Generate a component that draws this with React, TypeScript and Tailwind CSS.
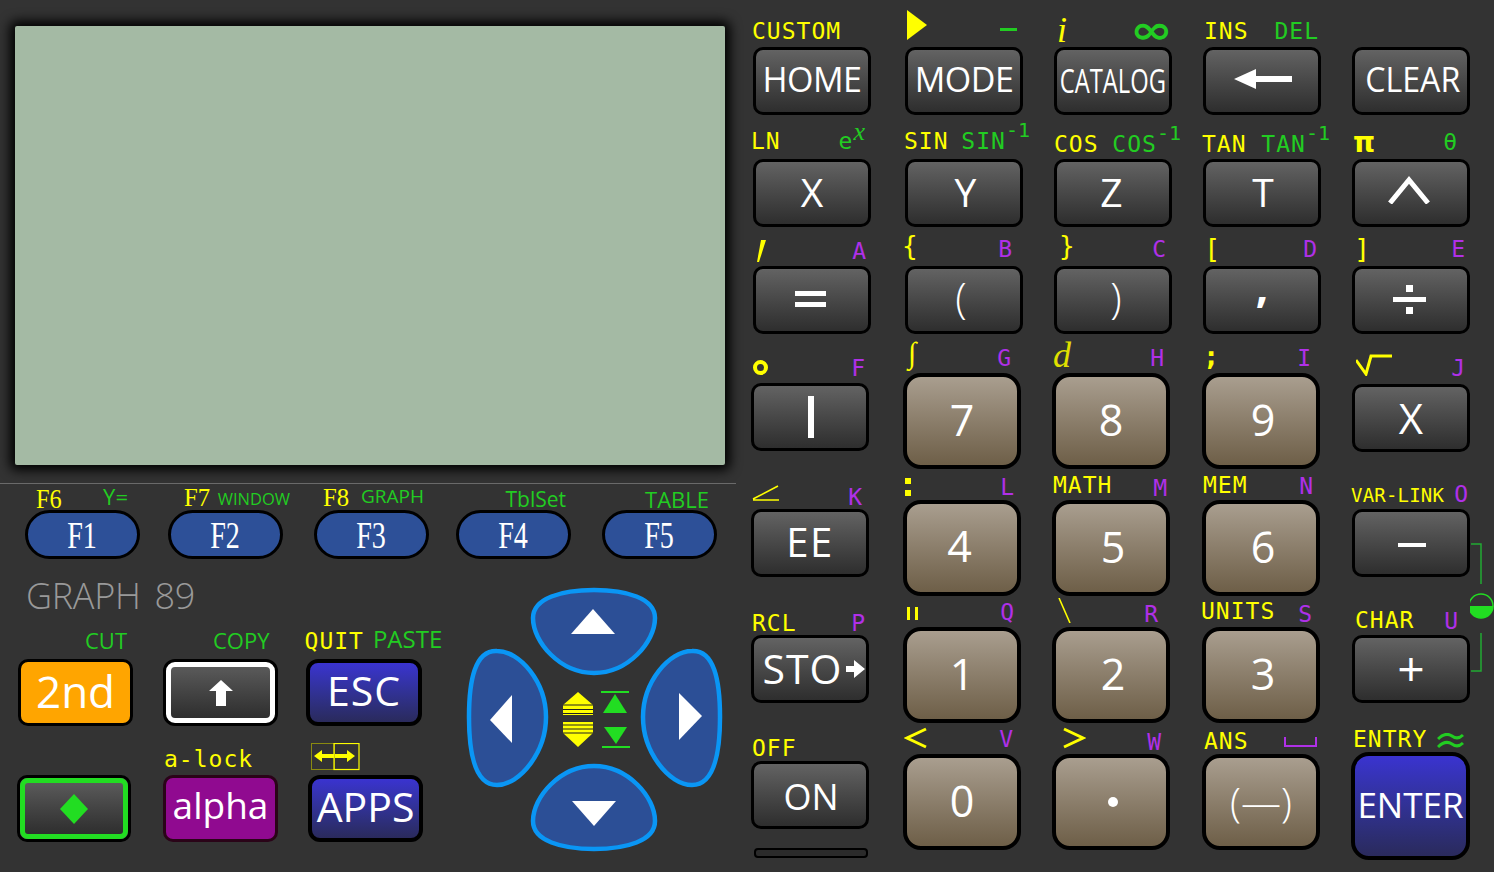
import type { ReactNode } from "react";

type Tone = "gray" | "tan" | "blue" | "orange" | "purple";

const TONES: Record<Tone, string> = {
  gray: "border-[3px] border-black rounded-[10px] bg-linear-to-b from-[#636363] to-[#2e2e2e]",
  tan: "border-[4px] border-black rounded-[18px] bg-linear-to-b from-[#a99e8f] to-[#6e5f48]",
  blue: "border-[4px] border-black rounded-[12px] bg-linear-to-b from-[#3a33d0] to-[#2a2a5c]",
  orange: "border-[3px] border-black rounded-[10px] bg-[#ffa500]",
  purple: "border-[3px] border-[#2a0418] rounded-[10px] bg-[#900a90]",
};

function Key({
  tone = "gray",
  className = "w-[118px] h-[68px]",
  children,
}: {
  tone?: Tone;
  className?: string;
  children?: ReactNode;
}) {
  return (
    <div
      className={`flex shrink-0 items-center justify-center overflow-hidden whitespace-nowrap text-white ${TONES[tone]} ${className}`}
    >
      {children}
    </div>
  );
}

const LABEL_COLORS = {
  y: "text-[#ffff00]",
  g: "text-[#22cc22]",
  p: "text-[#b030e8]",
};

function L({
  c = "y",
  className = "",
  children,
}: {
  c?: "y" | "g" | "p";
  className?: string;
  children?: ReactNode;
}) {
  return (
    <span
      className={`block whitespace-nowrap font-['DejaVu_Sans_Mono',monospace] text-[23px] leading-none tracking-[1px] ${LABEL_COLORS[c]} ${className}`}
    >
      {children}
    </span>
  );
}

function Cell({
  h,
  left,
  right,
  children,
}: {
  h: string;
  left?: ReactNode;
  right?: ReactNode;
  children: ReactNode;
}) {
  return (
    <div className={`flex w-[120px] flex-col ${h}`}>
      <div className="flex flex-1 items-end justify-between">
        {left ?? <span />}
        {right ?? <span />}
      </div>
      {children}
    </div>
  );
}

// superscript -1
function Inv() {
  return <span className="align-[12px] text-[20px] tracking-[0px]">-1</span>;
}

const F_KEYS = [
  {
    ml: "ml-[25px]",
    key: "F1",
    top: <span className="ml-[11px] mb-[-3px] block origin-left scale-x-[0.9] font-['Liberation_Serif',serif] text-[27px] leading-none text-[#ffff00]">F6</span>,
    side: <span className="mr-[12px] mb-[3px] text-[22px] leading-none text-[#22cc22]">Y=</span>,
  },
  {
    ml: "ml-[28px]",
    key: "F2",
    top: <span className="ml-[16px] -mb-[1px] block origin-left scale-x-[0.95] font-['Liberation_Serif',serif] text-[26px] leading-none text-[#ffff00]">F7</span>,
    side: <span className="mb-[3px] -mr-[7px] text-[16.5px] leading-none text-[#22cc22]">WINDOW</span>,
  },
  {
    ml: "ml-[31px]",
    key: "F3",
    top: <span className="ml-[9px] -mb-[1px] block origin-left scale-x-[0.95] font-['Liberation_Serif',serif] text-[26px] leading-none text-[#ffff00]">F8</span>,
    side: <span className="mb-[4px] mr-[5px] text-[19px] leading-none text-[#22cc22]">GRAPH</span>,
  },
  {
    ml: "ml-[27px]",
    key: "F4",
    top: <span />,
    side: <span className="mb-[0px] mr-[5px] text-[21px] leading-none text-[#22cc22]">TblSet</span>,
  },
  {
    ml: "ml-[31px]",
    key: "F5",
    top: <span />,
    side: <span className="mb-[0px] mr-[8px] text-[22px] leading-none text-[#22cc22]">TABLE</span>,
  },
];

function DPad() {
  return (
    <svg width="260" height="270" viewBox="465 585 260 270" className="shrink-0">
      <g className="fill-[#2c4f96] stroke-[#0a96f5]" strokeWidth="4.5">
        <path d="M594 590C626 590 655 598 655 618C655 642 628 673 594 673C560 673 533 642 533 618C533 598 562 590 594 590Z" />
        <path d="M594 849C626 849 655 841 655 821C655 797 628 766 594 766C560 766 533 797 533 821C533 841 562 849 594 849Z" />
        <path d="M469 717C469 680 475 650 497 651C520 651 546 682 546 717C546 752 520 785 497 785C475 785 469 754 469 717Z" />
        <path d="M720 717C720 680 714 650 692 651C669 651 643 682 643 717C643 752 669 785 692 785C714 785 720 754 720 717Z" />
      </g>
      <g fill="#fff">
        <path d="M593 609L571 634H615Z" />
        <path d="M572 801H616L594 826Z" />
        <path d="M512 695L490 720L512 743Z" />
        <path d="M679 693L702 716L679 740Z" />
      </g>
      <path d="M578 692L593 705V715H563V705Z" fill="#ffff00" />
      <path d="M563 722H593V733L578 747L563 733Z" fill="#ffff00" />
      <g stroke="#222" strokeWidth="1">
        <path d="M563 705H593M563 709.5H593M563 713.5H593M563 725H593M563 729H593M563 733H593" />
      </g>
      <g fill="#22dd22">
        <path d="M615 694L627 713H603Z" />
        <path d="M604 727H627L616 744Z" />
        <rect x="601" y="691" width="28" height="2" />
        <rect x="602" y="746" width="28" height="2" />
      </g>
    </svg>
  );
}

export default function App() {
  return (
    <div className="flex h-[872px] w-[1494px] overflow-hidden bg-[#333333] font-['Open_Sans',sans-serif]">
      {/* Screen and left keys */}
      <div className="w-[745px] shrink-0">
        <div className="ml-[15px] mt-[26px] h-[439px] w-[710px] rounded-[2px] bg-[#a4baa4] shadow-[0_0_12px_5px_#000]" />
        <div className="mt-[18px] h-px w-[736px] bg-[#6a6a6a]" />

        <div className="flex">
          {F_KEYS.map((f) => (
            <div key={f.key} className={`w-[115px] ${f.ml}`}>
              <div className="flex h-[26px] items-end justify-between whitespace-nowrap">
                {f.top}
                {f.side}
              </div>
              <div className="relative flex h-[49px] items-center justify-center rounded-[25px] border-[3px] border-black bg-[#2d5098] font-['Liberation_Serif',serif] text-[38px] leading-none text-white">
                <span className="scale-x-[0.74]">{f.key}</span>
              </div>
            </div>
          ))}
        </div>

        <div className="flex">
          <div className="w-[465px] shrink-0">
            <div className="ml-[26px] mt-[16px] h-[42px] text-[36px] font-light leading-[42px] tracking-[-0.3px] text-[#999999] [word-spacing:5px]">
              GRAPH 89
            </div>

            <div className="flex h-[42px] items-end">
              <div className="ml-[85px] mb-[8px] text-[22px] leading-none text-[#22cc22]">CUT</div>
              <div className="ml-[86px] mb-[8px] text-[22px] leading-none text-[#22cc22]">COPY</div>
              <L className="ml-[35px] mb-[6px] tracking-[0.5px]">QUIT</L>
              <div className="ml-[9px] mb-[8px] text-[24px] leading-none text-[#22cc22]">PASTE</div>
            </div>

            <div className="flex">
              <Key tone="orange" className="ml-[18px] h-[67px] w-[115px] text-[44px] font-medium">
                <span className="-mt-[4px]">2nd</span>
              </Key>
              <div className="ml-[30px] h-[67px] w-[115px] rounded-[12px] border-[3px] border-black bg-black">
                <div className="flex h-full items-center justify-center rounded-[9px] border-[5px] border-white bg-linear-to-b from-[#5a5a5a] to-[#2e2e2e]">
                  <svg width="24" height="28" viewBox="0 0 24 28">
                    <path d="M12 1L24 12H17V27H7V12H0Z" fill="#fff" />
                  </svg>
                </div>
              </div>
              <Key tone="blue" className="ml-[28px] h-[67px] w-[116px] text-[41px] font-medium tracking-[1px]">
                <span className="-mt-[4px]">ESC</span>
              </Key>
            </div>

            <div className="flex h-[49px] items-end">
              <L className="ml-[164px] mb-[4px] tracking-[0.5px]">a-lock</L>
              <svg width="49" height="28" viewBox="0 0 49 28" className="ml-[58px] mb-[4px]">
                <rect x="0.5" y="0.5" width="23" height="26" fill="none" stroke="#8a8a10" />
                <rect x="23" y="0.5" width="25" height="26" fill="none" stroke="#ffff00" strokeWidth="1.2" />
                <path d="M3 13L11 7V11H23V15H11V19Z" fill="#ffff00" />
                <path d="M44 13L36 7V11H24V15H36V19Z" fill="#ffff00" />
              </svg>
            </div>

            <div className="flex">
              <div className="ml-[17px] h-[67px] w-[114px] rounded-[10px] border-[3px] border-black bg-[#555555]">
                <div className="flex h-full items-center justify-center rounded-[8px] border-[5px] border-[#22dd22] bg-linear-to-b from-[#5a5a5a] to-[#2e2e2e]">
                  <svg width="28" height="30" viewBox="0 0 28 30">
                    <path d="M14 0L28 15L14 30L0 15Z" fill="#22dd22" />
                  </svg>
                </div>
              </div>
              <Key tone="purple" className="ml-[32px] h-[67px] w-[115px] text-[37px] font-medium">
                <span className="-mt-[8px]">alpha</span>
              </Key>
              <Key tone="blue" className="ml-[30px] h-[67px] w-[115px] text-[41px] font-medium">
                <span className="-mt-[4px]">APPS</span>
              </Key>
            </div>
          </div>
          <div className="mt-[26px]">
            <DPad />
          </div>
        </div>
      </div>

      {/* Main keypad */}
      <div className="relative flex flex-1 pl-[6px]">
        <svg width="24" height="135" viewBox="0 0 24 135" className="absolute right-0 top-[540px]">
          <path d="M1 4H11V44M11 93V131H1" fill="none" stroke="#22aa33" strokeWidth="1.5" />
          <circle cx="11" cy="66" r="12" fill="#333" stroke="#22dd22" strokeWidth="1.5" />
          <path d="M-1 66A12 12 0 0 0 23 66Z" fill="#22dd22" />
        </svg>

        {/* Column 1 */}
        <div className="w-[152px] shrink-0">
          <Cell h="h-[115px]" left={<L className="ml-[1px] mb-[4px] tracking-[1.8px]">CUSTOM</L>}>
            <Key className="ml-[2px] h-[68px] w-[118px] text-[34px] font-medium tracking-[-0.5px]">
              <span className="-mt-[3px]">HOME</span>
            </Key>
          </Cell>
          <Cell
            h="h-[112px]"
            left={<L className="mb-[6px]">LN</L>}
            right={
              <L c="g" className="mb-[6px] mr-[5px]">
                e<span className="align-[9px] font-['Liberation_Serif',serif] text-[26px] italic">x</span>
              </L>
            }
          >
            <Key className="ml-[2px] h-[68px] w-[118px] text-[39px]">
              <span className="-mt-[2px]">X</span>
            </Key>
          </Cell>
          <Cell
            h="h-[107px]"
            left={
              <svg width="9" height="22" viewBox="0 0 9 22" className="ml-[6px] mb-[4px]">
                <path d="M4 0H9L2 22H0Z" fill="#ffff00" />
              </svg>
            }
            right={<L c="p" className="mb-[3px] mr-[4px]">A</L>}
          >
            <Key className="ml-[2px] h-[68px] w-[118px]">
              <div className="-ml-[3px] -mt-[2px] flex flex-col gap-[6px]">
                <div className="h-[5px] w-[31px] bg-white" />
                <div className="h-[5px] w-[31px] bg-white" />
              </div>
            </Key>
          </Cell>
          <Cell
            h="h-[117px]"
            left={<div className="ml-[2px] mb-[8px] h-[15px] w-[15px] rounded-full border-[4px] border-[#ffff00]" />}
            right={<L c="p" className="mb-[3px] mr-[5px]">F</L>}
          >
            <Key className="h-[68px] w-[118px]">
              <div className="ml-[2px] h-[42px] w-[6px] bg-white" />
            </Key>
          </Cell>
          <Cell
            h="h-[126px]"
            left={
              <svg width="28" height="17" viewBox="0 0 28 17" className="ml-[1px] mb-[7px]">
                <path d="M1 14L26 1M1 15H27" fill="none" stroke="#ffff00" strokeWidth="1.6" />
              </svg>
            }
            right={<L c="p" className="mr-[8px]">K</L>}
          >
            <Key className="h-[68px] w-[118px] text-[40px] font-medium tracking-[1.5px]">
              <span className="-mt-[3px]">EE</span>
            </Key>
          </Cell>
          <Cell
            h="h-[126px]"
            left={<L className="ml-[1px]">RCL</L>}
            right={<L c="p" className="mr-[5px]">P</L>}
          >
            <Key className="h-[68px] w-[118px] pl-[8px] text-[41px]">
              <span className="tracking-[1px]">STO</span>
              <svg width="19" height="18" viewBox="0 0 19 18" className="ml-[4px]">
                <path d="M0 6H8V0L19 9L8 18V12H0Z" fill="#fff" />
              </svg>
            </Key>
          </Cell>
          <Cell h="h-[126px]" left={<L className="ml-[1px] mb-[1px]">OFF</L>}>
            <Key className="h-[68px] w-[118px] text-[36px] font-medium">
              <span className="mt-[3px] ml-[2px]">ON</span>
            </Key>
          </Cell>
          <div className="ml-[3px] mt-[19px] h-[10px] w-[114px] rounded-[4px] border-[2px] border-black bg-[#2b2b2b]" />
        </div>

        {/* Column 2 */}
        <div className="w-[149px] shrink-0">
          <Cell
            h="h-[115px]"
            left={
              <svg width="20" height="30" viewBox="0 0 20 30" className="ml-[4px] mb-[7px]">
                <path d="M0 0L20 15L0 30Z" fill="#ffff00" />
              </svg>
            }
            right={<div className="mb-[16px] mr-[6px] h-[3px] w-[17px] bg-[#22cc22]" />}
          >
            <Key className="ml-[2px] h-[68px] w-[118px] text-[34px] font-medium tracking-[-0.5px]">
              <span className="-mt-[3px]">MODE</span>
            </Key>
          </Cell>
          <Cell
            h="h-[112px]"
            left={<L className="ml-[1px] mb-[6px]">SIN</L>}
            right={
              <L c="g" className="mb-[6px] -mr-[7px]">
                SIN<Inv />
              </L>
            }
          >
            <Key className="ml-[2px] h-[68px] w-[118px] text-[39px]">
              <span className="-mt-[2px] ml-[3px]">Y</span>
            </Key>
          </Cell>
          <Cell
            h="h-[107px]"
            left={<L className="-ml-[1px] mb-[7px] text-[26px]!">{"{"}</L>}
            right={<L c="p" className="mb-[5px] mr-[10px]">B</L>}
          >
            <Key className="ml-[2px] h-[68px] w-[118px] text-[42px] font-light">
              <span className="-ml-[6px] -mt-[8px]">(</span>
            </Key>
          </Cell>
          <Cell
            h="h-[135px]"
            left={<span className="ml-[5px] mb-[5px] block font-['Liberation_Serif',serif] text-[30px] leading-none text-[#ffff00]">∫</span>}
            right={<L c="p" className="mb-[3px] mr-[11px]">G</L>}
          >
            <Key tone="tan" className="h-[96px] w-[118px] pb-[2px] text-[43px]">7</Key>
          </Cell>
          <Cell
            h="h-[127px]"
            left={
              <div className="ml-[2px] mb-[4px] flex flex-col gap-[6px]">
                <div className="h-[6px] w-[6px] bg-[#ffff00]" />
                <div className="h-[6px] w-[6px] bg-[#ffff00]" />
              </div>
            }
            right={<L c="p" className="mb-[1px] mr-[8px]">L</L>}
          >
            <Key tone="tan" className="h-[96px] w-[118px] pb-[4px] pr-[5px] text-[43px]">4</Key>
          </Cell>
          <Cell
            h="h-[127px]"
            left={
              <div className="ml-[4px] mb-[7px] flex gap-[5px]">
                <div className="h-[13px] w-[3px] bg-[#ffff00]" />
                <div className="h-[13px] w-[3px] bg-[#ffff00]" />
              </div>
            }
            right={<L c="p" className="mb-[3px] mr-[8px]">Q</L>}
          >
            <Key tone="tan" className="h-[96px] w-[118px] pb-[2px] text-[43px]">1</Key>
          </Cell>
          <Cell
            h="h-[127px]"
            left={
              <svg width="23" height="22" viewBox="0 0 23 22" className="ml-[1px] mb-[5px]">
                <path d="M22 2L3 11L22 20" fill="none" stroke="#ffff00" strokeWidth="3" />
              </svg>
            }
            right={<L c="p" className="mb-[3px] mr-[9px]">V</L>}
          >
            <Key tone="tan" className="h-[96px] w-[118px] pb-[2px] text-[43px]">0</Key>
          </Cell>
        </div>

        {/* Column 3 */}
        <div className="w-[150px] shrink-0">
          <Cell
            h="h-[115px]"
            left={<span className="ml-[5px] -mb-[1px] block font-['Liberation_Serif',serif] text-[36px] italic leading-none text-[#ffff00]">i</span>}
            right={<span className="mb-[4px] -mr-[1px] block origin-right scale-x-[1.35] font-['DejaVu_Sans',sans-serif] text-[38px] font-bold leading-[26px] text-[#22cc22]">∞</span>}
          >
            <Key className="ml-[2px] h-[68px] w-[118px] text-[33px] font-medium">
              <span className="scale-x-[0.72]">CATALOG</span>
            </Key>
          </Cell>
          <Cell
            h="h-[112px]"
            left={<L className="ml-[2px] mb-[3px]">COS</L>}
            right={
              <L c="g" className="mb-[3px] -mr-[9px]">
                COS<Inv />
              </L>
            }
          >
            <Key className="ml-[2px] h-[68px] w-[118px] text-[39px]">
              <span className="-mt-[2px] -ml-[3px]">Z</span>
            </Key>
          </Cell>
          <Cell
            h="h-[107px]"
            left={<L className="ml-[7px] mb-[7px] text-[26px]!">{"}"}</L>}
            right={<L c="p" className="mb-[5px] mr-[5px]">C</L>}
          >
            <Key className="ml-[2px] h-[68px] w-[118px] text-[42px] font-light">
              <span className="ml-[6px] -mt-[8px]">)</span>
            </Key>
          </Cell>
          <Cell
            h="h-[135px]"
            left={<span className="ml-[1px] mb-[0px] block font-['Liberation_Serif',serif] text-[36px] italic leading-none text-[#e0e000]">d</span>}
            right={<L c="p" className="mb-[3px] mr-[7px]">H</L>}
          >
            <Key tone="tan" className="h-[96px] w-[118px] pb-[2px] text-[43px]">8</Key>
          </Cell>
          <Cell
            h="h-[127px]"
            left={<L className="ml-[1px] mb-[3px]">MATH</L>}
            right={<L c="p" className="mr-[4px]">M</L>}
          >
            <Key tone="tan" className="h-[96px] w-[118px] pb-[2px] pl-[4px] text-[43px]">5</Key>
          </Cell>
          <Cell
            h="h-[127px]"
            left={
              <svg width="13" height="25" viewBox="0 0 13 25" className="ml-[6px] mb-[4px]">
                <path d="M1 0L12 25" fill="none" stroke="#ffff00" strokeWidth="1.6" />
              </svg>
            }
            right={<L c="p" className="mb-[1px] mr-[13px]">R</L>}
          >
            <Key tone="tan" className="h-[96px] w-[118px] pb-[2px] pl-[4px] text-[43px]">2</Key>
          </Cell>
          <Cell
            h="h-[127px]"
            left={
              <svg width="23" height="22" viewBox="0 0 23 22" className="ml-[11px] mb-[5px]">
                <path d="M1 2L20 11L1 20" fill="none" stroke="#ffff00" strokeWidth="3" />
              </svg>
            }
            right={<L c="p" className="mr-[10px]">W</L>}
          >
            <Key tone="tan" className="h-[96px] w-[118px] pl-[4px] text-[43px]">
              <div className="h-[10px] w-[10px] rounded-full bg-white" />
            </Key>
          </Cell>
        </div>

        {/* Column 4 */}
        <div className="w-[149px] shrink-0">
          <Cell
            h="h-[115px]"
            left={<L className="ml-[2px] mb-[4px]">INS</L>}
            right={<L c="g" className="mb-[4px] mr-[3px]">DEL</L>}
          >
            <Key className="ml-[1px] h-[68px] w-[118px]">
              <svg width="58" height="20" viewBox="0 0 58 20" className="-mt-[4px] ml-[1px]">
                <path d="M0 10L22 0V7H58V13H22V20Z" fill="#fff" />
              </svg>
            </Key>
          </Cell>
          <Cell
            h="h-[112px]"
            left={<L className="mb-[3px]">TAN</L>}
            right={
              <L c="g" className="mb-[3px] -mr-[8px]">
                TAN<Inv />
              </L>
            }
          >
            <Key className="ml-[1px] h-[68px] w-[118px] text-[39px]">
              <span className="-mt-[2px] ml-[2px]">T</span>
            </Key>
          </Cell>
          <Cell
            h="h-[107px]"
            left={<L className="ml-[2px] mb-[4px] text-[27px]!">[</L>}
            right={<L c="p" className="mb-[5px] mr-[4px]">D</L>}
          >
            <Key className="ml-[1px] h-[68px] w-[118px] text-[44px] font-bold">
              <span className="mb-[30px] block h-[20px] leading-[20px]">,</span>
            </Key>
          </Cell>
          <Cell
            h="h-[135px]"
            left={<L className="ml-[1px] mb-[4px] text-[27px]! font-bold">;</L>}
            right={<L c="p" className="mb-[3px] mr-[10px]">I</L>}
          >
            <Key tone="tan" className="h-[96px] w-[118px] pb-[2px] pl-[4px] text-[43px]">9</Key>
          </Cell>
          <Cell
            h="h-[127px]"
            left={<L className="ml-[1px] mb-[3px]">MEM</L>}
            right={<L c="p" className="mb-[2px] mr-[8px]">N</L>}
          >
            <Key tone="tan" className="h-[96px] w-[118px] pb-[2px] pl-[4px] text-[43px]">6</Key>
          </Cell>
          <Cell
            h="h-[127px]"
            left={<L className="-ml-[1px] mb-[4px]">UNITS</L>}
            right={<L c="p" className="mb-[1px] mr-[9px]">S</L>}
          >
            <Key tone="tan" className="h-[96px] w-[118px] pb-[2px] pl-[4px] text-[43px]">3</Key>
          </Cell>
          <Cell
            h="h-[127px]"
            left={<L className="ml-[2px] mb-[1px]">ANS</L>}
            right={
              <svg width="33" height="10" viewBox="0 0 33 10" className="mb-[7px] mr-[5px]">
                <path d="M1 0V9H32V0" fill="none" stroke="#b030e8" strokeWidth="2" />
              </svg>
            }
          >
            <Key tone="tan" className="h-[96px] w-[118px] text-[40px] font-light">(—)</Key>
          </Cell>
        </div>

        {/* Column 5 */}
        <div className="w-[120px] shrink-0">
          <Cell h="h-[115px]">
            <Key className="ml-[1px] h-[68px] w-[118px] text-[35px] font-medium">
              <span className="-mt-[3px] ml-[3px] scale-x-[0.92]">CLEAR</span>
            </Key>
          </Cell>
          <Cell
            h="h-[112px]"
            left={<span className="ml-[2px] mb-[2px] block font-['DejaVu_Sans',sans-serif] text-[28px] font-bold leading-none text-[#ffff00]">π</span>}
            right={<L c="g" className="mb-[5px] mr-[13px]">θ</L>}
          >
            <Key className="ml-[1px] h-[68px] w-[118px]">
              <svg width="42" height="28" viewBox="0 0 42 28" className="mb-[6px] mr-[5px]">
                <path d="M2 27L21 4L40 27" fill="none" stroke="#fff" strokeWidth="5" />
              </svg>
            </Key>
          </Cell>
          <Cell
            h="h-[107px]"
            left={<L className="ml-[3px] mb-[4px] text-[27px]!">]</L>}
            right={<L c="p" className="mb-[5px] mr-[5px]">E</L>}
          >
            <Key className="ml-[1px] h-[68px] w-[118px]">
              <div className="mb-[2px] mr-[4px] flex flex-col items-center gap-[5px]">
                <div className="h-[7px] w-[7px] bg-white" />
                <div className="h-[5px] w-[33px] bg-white" />
                <div className="h-[7px] w-[7px] bg-white" />
              </div>
            </Key>
          </Cell>
          <Cell
            h="h-[118px]"
            left={
              <svg width="37" height="22" viewBox="0 0 37 22" className="ml-[5px] mb-[8px]">
                <path d="M0 6L10 20L15 2H36" fill="none" stroke="#ffff00" strokeWidth="3" />
              </svg>
            }
            right={<L c="p" className="mb-[4px] mr-[5px]">J</L>}
          >
            <Key className="ml-[1px] h-[68px] w-[118px] text-[42px]">
              <span className="-mt-[2px]">X</span>
            </Key>
          </Cell>
          <Cell
            h="h-[125px]"
            left={<L className="mb-[4px] text-[19px]! tracking-[0.2px]!">VAR-LINK</L>}
            right={<L c="p" className="mb-[3px] mr-[2px]">O</L>}
          >
            <Key className="ml-[1px] h-[68px] w-[118px]">
              <div className="ml-[1px] mt-[3px] h-[4px] w-[28px] bg-white" />
            </Key>
          </Cell>
          <Cell
            h="h-[126px]"
            left={<L className="ml-[4px] mb-[3px]">CHAR</L>}
            right={<L c="p" className="mb-[2px] mr-[12px]">U</L>}
          >
            <Key className="ml-[1px] h-[68px] w-[118px] text-[48px] leading-none">
              <span className="-mt-[3px]">+</span>
            </Key>
          </Cell>
          <Cell
            h="h-[157px]"
            left={<L className="ml-[2px] mb-[1px]">ENTRY</L>}
            right={
              <svg width="27" height="16" viewBox="0 0 27 16" className="mb-[3px] mr-[7px]">
                <path d="M1 6C7 0 12 1 15 3C19 6 23 5 26 2M1 14C7 8 12 9 15 11C19 14 23 13 26 10" fill="none" stroke="#22cc22" strokeWidth="3" />
              </svg>
            }
          >
            <Key tone="blue" className="h-[108px] w-[119px] rounded-[18px] text-[35px] font-medium">
              <span className="-mt-[2px]">ENTER</span>
            </Key>
          </Cell>
        </div>
      </div>
    </div>
  );
}
